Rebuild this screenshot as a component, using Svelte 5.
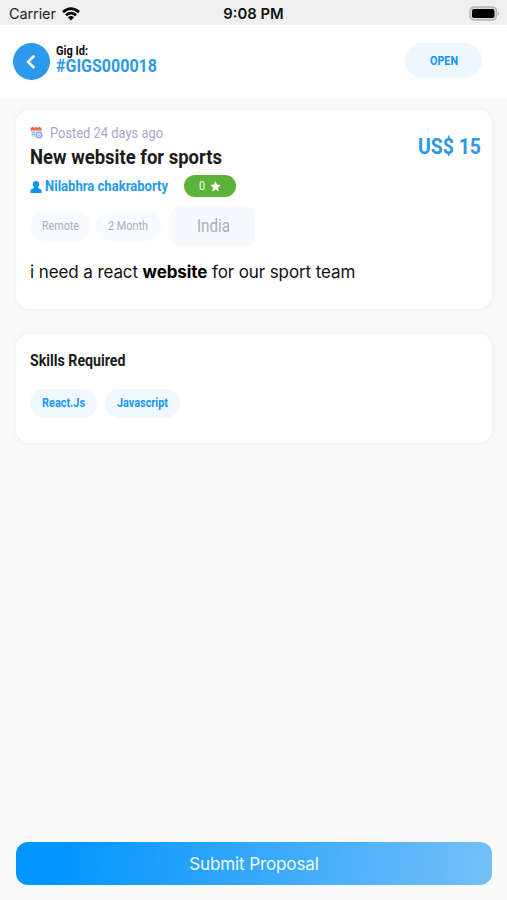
<script>
  const gig = {
    id: '#GIGS000018',
    status: 'OPEN',
    posted: 'Posted 24 days ago',
    title: 'New website for sports',
    owner: 'Nilabhra chakraborty',
    rating: '0',
    price: 'US$ 15'
  };

  const tags = [
    { text: 'Remote', width: 37 },
    { text: '2 Month', width: 40 }
  ];

  const skills = [
    { text: 'React.Js', width: 43 },
    { text: 'Javascript', width: 51 }
  ];
</script>

<!-- condensed label: Roboto narrowed to a fixed width, baseline at 80% of its height -->
{#snippet narrow(text, width, size, weight = 400)}
  <svg class="narrow" {width} height={size} style:font-size="{size}px">
    <text x="0" y={size * 0.8} textLength={width} lengthAdjust="spacingAndGlyphs" font-weight={weight}>{text}</text>
  </svg>
{/snippet}

<div class="screen">
  <div class="status-bar">
    <div class="carrier">
      <span>Carrier</span>
      <svg width="18" height="14" viewBox="0 0 18 14" fill="none" stroke="#080808" stroke-width="2.7">
        <path d="M1 5.1Q9 -1.7 17 5.1" />
        <path d="M3.9 8.2Q9 4 14.1 8.2" />
        <path d="M9 13.4L5.9 10.3Q9 7.7 12.1 10.3Z" fill="#080808" stroke="none" />
      </svg>
    </div>
    <div class="time">9:08 PM</div>
    <svg class="battery" width="31" height="15" viewBox="0 0 31 15">
      <rect x="1" y="1" width="26.5" height="13" rx="4" fill="#d8d8d8" stroke="#b4b4b4" stroke-width="1.4" />
      <rect x="3" y="3" width="22.5" height="9" rx="2" fill="#000" />
      <path d="M29 5.3Q31 7.5 29 9.7Z" fill="#ababab" />
    </svg>
  </div>

  <header>
    <button class="back" aria-label="Back">
      <svg width="37" height="37" viewBox="0 0 37 37" fill="none" stroke="#fff" stroke-width="2.6" stroke-linecap="round" stroke-linejoin="round">
        <path d="M20.5 13.5L15 18.9L20.5 24.3" />
      </svg>
    </button>
    <div class="gig-id">
      <div class="black">{@render narrow('Gig Id:', 32, 12, 700)}</div>
      <div class="blue">{@render narrow(gig.id, 101, 17.5, 700)}</div>
    </div>
    <div class="status">{@render narrow(gig.status, 28, 12, 700)}</div>
  </header>

  <main>
    <section class="card details">
      <div class="top">
        <div>
          <div class="posted">
            <svg width="13" height="13" viewBox="0 0 13 13">
              <path d="M1 4.5H11.5V9H9V11H2.5Q1 11 1 9.5Z" fill="#dce5f7" />
              <path d="M.5 1.5H11.5V4.5H.5Z" fill="#ed6a42" />
              <path d="M2.5 .7V2.3M6 .7V2.3M9.4 .7V2.3" stroke="#c9553c" stroke-width=".8" />
              <path d="M2 6.2H5M2 8.4H5" stroke="#78a7e2" stroke-width="1" />
              <circle cx="9" cy="9" r="2.9" fill="#d9e9fc" stroke="#79a7e9" stroke-width="1.2" />
              <path d="M7.7 8.8L8.8 9.8L10.5 8" fill="none" stroke="#79a7e9" stroke-width=".8" />
            </svg>
            {@render narrow(gig.posted, 113, 14.5)}
          </div>
          <div class="title">{@render narrow(gig.title, 192, 20, 700)}</div>
        </div>
        <div class="price">{@render narrow(gig.price, 63, 21.5, 700)}</div>
      </div>

      <div class="owner">
        <svg width="12" height="12" viewBox="0 0 12 12" fill="#0d94f7">
          <ellipse cx="6" cy="3.2" rx="3.2" ry="3.2" />
          <path d="M.3 12V10.2Q.3 7.9 3.3 7.4L4.3 6H7.7L8.7 7.4Q11.7 7.9 11.7 10.2V12Z" />
        </svg>
        {@render narrow(gig.owner, 123, 14.5, 700)}
        <div class="rating">
          {@render narrow(gig.rating, 6, 12.5)}
          <svg width="11" height="11" viewBox="0 0 11 11" fill="#fff">
            <path d="M5.5 .2L7 3.6L10.8 4L8 6.6L8.8 10.4L5.5 8.4L2.2 10.4L3 6.6L.2 4L4 3.6Z" />
          </svg>
        </div>
      </div>

      <div class="tags">
        {#each tags as tag}
          <div class="tag">{@render narrow(tag.text, tag.width, 12.5)}</div>
        {/each}
        <div class="country">{@render narrow('India', 33, 17.5)}</div>
      </div>

      <p>i need a react <b>website</b> for our sport team</p>
    </section>

    <section class="card skills">
      <div class="heading">{@render narrow('Skills Required', 95.5, 16, 700)}</div>
      <div class="skill-list">
        {#each skills as skill}
          <div class="skill">{@render narrow(skill.text, skill.width, 12, 700)}</div>
        {/each}
      </div>
    </section>
  </main>

  <button class="submit">Submit Proposal</button>
</div>

<style>
  :global(body) {
    background: #fafafa;
  }

  .screen {
    display: flex;
    flex-direction: column;
    box-sizing: border-box;
    height: 900px;
    padding-bottom: 15px;
    background: #fafafa;
    font-family: Inter, "Liberation Sans", sans-serif;
  }

  svg {
    display: block;
    flex: none;
  }

  .narrow {
    overflow: visible;
    font-family: Roboto, sans-serif;
    fill: currentColor;
  }

  button {
    border: none;
    padding: 0;
    font-family: inherit;
  }

  .status-bar {
    display: grid;
    grid-template-columns: 1fr auto 1fr;
    align-items: center;
    height: 25px;
    padding: 2px 7px 0 9px;
    box-sizing: border-box;
    background: #f0f0f0;
    font-size: 14.5px;
    color: #222;
  }

  .carrier {
    display: flex;
    align-items: center;
    gap: 6px;
    letter-spacing: -0.1px;
  }

  .time {
    margin-right: 2px;
    color: #111;
    font-size: 14.8px;
    font-weight: 600;
  }

  .battery {
    justify-self: end;
    margin-top: -1px;
  }

  header {
    display: flex;
    align-items: flex-start;
    height: 73px;
    box-sizing: border-box;
    padding: 18px 25px 0 13px;
    background: #fff;
  }

  .back {
    width: 37px;
    height: 37px;
    border-radius: 50%;
    background: #2b9aed;
  }

  .gig-id {
    flex: 1;
    padding: 2px 0 0 6px;
  }

  .black {
    color: #080808;
  }

  .blue {
    padding-top: 1px;
    color: #2e98e8;
  }

  .status {
    display: flex;
    align-items: center;
    justify-content: center;
    width: 77px;
    height: 35px;
    border-radius: 18px;
    background: #edf7ff;
    color: #0d94f7;
  }

  main {
    flex: 1;
    display: flex;
    flex-direction: column;
    gap: 25px;
    padding: 12px 15px 0 16px;
  }

  .card {
    box-sizing: border-box;
    border-radius: 14px;
    background: #fff;
    box-shadow: 0 0 6px rgba(0, 0, 0, 0.06);
  }

  .details {
    height: 199px;
    padding: 16px 11px 0 14px;
  }

  .top {
    display: flex;
    justify-content: space-between;
  }

  .posted {
    display: flex;
    gap: 7px;
    height: 22px;
    color: #a7a8cc;
  }

  .title {
    color: #1b1b1b;
  }

  .price {
    padding-top: 11px;
    color: #2e98e8;
  }

  .owner {
    display: flex;
    align-items: center;
    gap: 3px;
    height: 23px;
    margin-top: 6px;
    padding-top: 1px;
    color: #249aec;
  }

  .rating {
    display: flex;
    align-items: center;
    justify-content: center;
    gap: 5px;
    width: 52px;
    height: 22px;
    margin: -1px 0 0 13px;
    border-radius: 11px;
    background: #5bb33a;
    color: #fff;
  }

  .tags {
    display: flex;
    align-items: center;
    gap: 5px;
    height: 39px;
    margin-top: 9px;
    color: #a9aebb;
  }

  .tag {
    padding: 8px 12px;
    border-radius: 15px;
    background: #f7faff;
  }

  .tag + .tag {
    padding-right: 13px;
  }

  .country {
    display: flex;
    align-items: center;
    justify-content: center;
    width: 84px;
    height: 39px;
    margin-left: 5px;
    border-radius: 7px;
    background: #f6faff;
  }

  p {
    margin: 15px 0 0;
    font-size: 17px;
    line-height: 22px;
    letter-spacing: -0.1px;
    color: #111;
    white-space: nowrap;
  }

  b {
    color: #000;
    font-weight: 700;
  }

  .skills {
    height: 109px;
    padding: 19px 14px 0;
  }

  .heading {
    color: #1b1b1b;
  }

  .skill-list {
    display: flex;
    gap: 8px;
    margin-top: 20px;
  }

  .skill {
    padding: 8px 12px 9px;
    border-radius: 15px;
    background: #eff8ff;
    color: #1596f5;
  }

  .submit {
    height: 43px;
    margin: 0 15px 0 16px;
    border-radius: 12px;
    background: linear-gradient(100deg, #0095ff 8%, #75bff8 100%);
    color: #f0faff;
    font-size: 17px;
    letter-spacing: -0.1px;
  }
</style>
